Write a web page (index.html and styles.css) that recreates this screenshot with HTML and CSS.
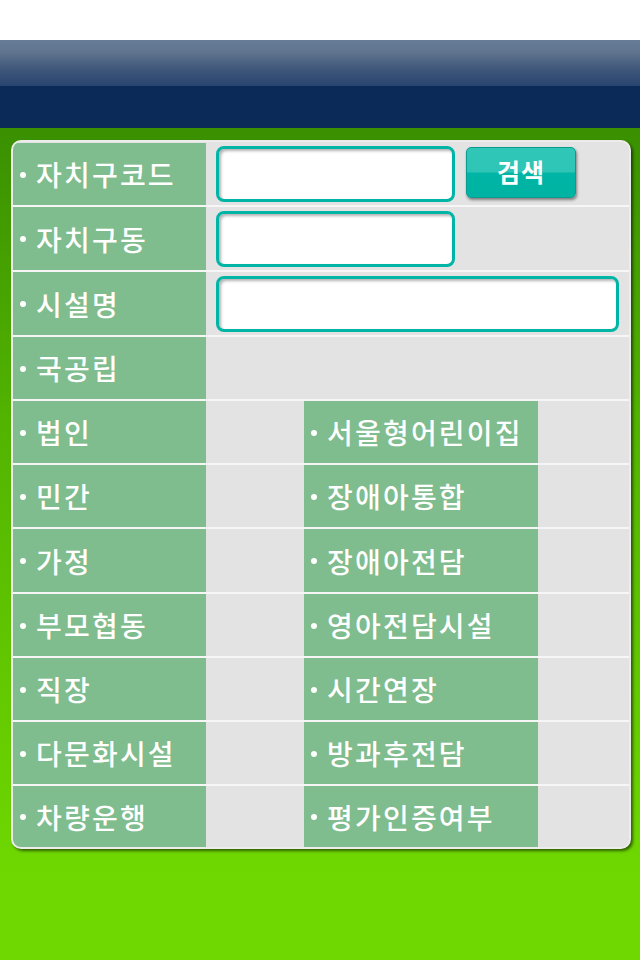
FILE: index.html
```html
<!DOCTYPE html>
<html lang="ko">
<head>
    <meta charset="UTF-8">
    <title>어린이집 검색</title>
    <link rel="stylesheet" href="styles.css">
</head>
<body>
    <div class="status-space"></div>
    <div class="title-bar">
        <div class="title-gloss"></div>
    </div>
    <div class="content">
        <div class="search-panel">
            <div class="row">
                <div class="label">자치구코드</div>
                <div class="field">
                    <input type="text" class="text-input short">
                    <button class="search-btn">검색</button>
                </div>
            </div>
            <div class="row tall">
                <div class="label">자치구동</div>
                <div class="field">
                    <input type="text" class="text-input short">
                </div>
            </div>
            <div class="row tall">
                <div class="label">시설명</div>
                <div class="field">
                    <input type="text" class="text-input long">
                </div>
            </div>
            <div class="row">
                <div class="label">국공립</div>
                <div class="field"></div>
            </div>
            <div class="row">
                <div class="label">법인</div>
                <div class="spacer"></div>
                <div class="label">서울형어린이집</div>
            </div>
            <div class="row">
                <div class="label">민간</div>
                <div class="spacer"></div>
                <div class="label">장애아통합</div>
            </div>
            <div class="row tall">
                <div class="label">가정</div>
                <div class="spacer"></div>
                <div class="label">장애아전담</div>
            </div>
            <div class="row">
                <div class="label">부모협동</div>
                <div class="spacer"></div>
                <div class="label">영아전담시설</div>
            </div>
            <div class="row">
                <div class="label">직장</div>
                <div class="spacer"></div>
                <div class="label">시간연장</div>
            </div>
            <div class="row">
                <div class="label">다문화시설</div>
                <div class="spacer"></div>
                <div class="label">방과후전담</div>
            </div>
            <div class="row">
                <div class="label">차량운행</div>
                <div class="spacer"></div>
                <div class="label">평가인증여부</div>
            </div>
        </div>
    </div>
</body>
</html>
```

FILE: styles.css
```css
* {
    box-sizing: border-box;
}

html, body {
    margin: 0;
    height: 100%;
}

body {
    font-family: "Noto Sans CJK KR", "Noto Sans", sans-serif;
    background: #ffffff;
    display: flex;
    flex-direction: column;
}

.status-space {
    height: 40px;
    background: #ffffff;
}

.title-bar {
    height: 88px;
    background: #0c2a57;
}

.title-gloss {
    height: 46px;
    background: linear-gradient(to bottom, #677c97 0%, #61758f 25%, #3e5679 65%, #294470 100%);
}

.content {
    flex: 1;
    background: linear-gradient(to bottom, #3a9000 0%, #52b300 35%, #6fd800 90%);
    padding: 12px 9px 0 11px;
}

.search-panel {
    width: 620px;
    background: #e3e3e3;
    border: 2px solid #ececec;
    border-radius: 10px;
    box-shadow: 2px 2px 3px rgba(0, 0, 0, 0.55);
    overflow: hidden;
    padding-top: 1px;
}

.row {
    display: grid;
    grid-template-columns: 193px 98px 234px 1fr;
    height: 64px;
    border-bottom: 2px solid #f6f6f6;
}

.row.tall {
    height: 65px;
}

.row:last-child {
    border-bottom: none;
    height: 61px;
}

.label {
    background: #7fbc8e;
    color: #ffffff;
    font-size: 28px;
    font-weight: 500;
    display: flex;
    align-items: center;
    padding-left: 7px;
    white-space: nowrap;
    letter-spacing: 2.2px;
}

.label::before {
    content: "";
    width: 6px;
    height: 6px;
    border-radius: 50%;
    background: #ffffff;
    margin-right: 10px;
    margin-top: 1px;
}

.field {
    grid-column: 2 / 5;
    display: flex;
    align-items: center;
    padding-left: 10px;
}

.text-input {
    height: 56px;
    border: 3px solid #00b5a5;
    border-radius: 8px;
    background: #ffffff;
    box-shadow: inset 2px 2px 3px rgba(0, 0, 0, 0.3);
    outline: none;
}

.text-input.short {
    width: 239px;
}

.text-input.long {
    width: 403px;
}

.search-btn {
    width: 110px;
    height: 51px;
    margin-left: 11px;
    margin-top: -4px;
    border: 1px solid #0a9b8f;
    border-radius: 5px;
    background: linear-gradient(to bottom, #30c6b8 0%, #2ec4b6 48%, #00b5a5 52%, #00b3a3 100%);
    box-shadow: 1px 2px 3px rgba(0, 0, 0, 0.45);
    color: #ffffff;
    font-family: "Noto Sans CJK KR", sans-serif;
    font-size: 25px;
    font-weight: bold;
    letter-spacing: 1px;
    padding: 0 0 3px;
}
```
